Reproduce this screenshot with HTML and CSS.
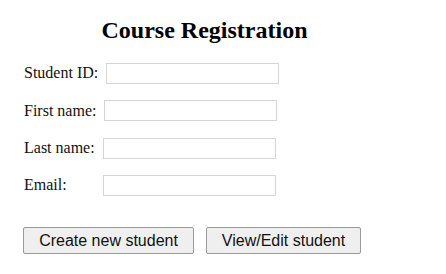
FILE: index.html
```html
<!DOCTYPE html>
<html>
<head>
<meta charset="utf-8">
<title>Course Registration</title>
<link rel="stylesheet" href="styles.css">
</head>
<body>
<div class="page">
  <h2 class="title">Course Registration</h2>
  <form class="form">
    <div class="fields">
      <div class="row"><label class="lbl lbl-id" for="sid">Student ID:</label><input class="field" id="sid" type="text"></div>
      <div class="row"><label class="lbl lbl-first" for="fn">First name:</label><input class="field" id="fn" type="text"></div>
      <div class="row"><label class="lbl lbl-last" for="ln">Last name:</label><input class="field" id="ln" type="text"></div>
      <div class="row"><label class="lbl lbl-email" for="em">Email:</label><input class="field" id="em" type="text"></div>
    </div>
    <div class="actions">
      <button type="button" class="btn btn-create">Create new student</button>
      <button type="button" class="btn btn-view">View/Edit student</button>
    </div>
  </form>
</div>
</body>
</html>
```
FILE: styles.css
```css
html, body {
  margin: 0;
  padding: 0;
  background: #ffffff;
}
body {
  padding: 8px;
  font-family: "Liberation Serif", "Times New Roman", serif;
  font-size: 16px;
  color: #111111;
}
.page {
  width: 393px;
}
.title {
  margin: 9px 0 0 0;
  font-size: 24px;
  font-weight: bold;
  text-align: center;
  line-height: 27.6px;
  color: #000000;
}
.form {
  margin: 18.4px 0 0 16px;
}
.fields {
  display: flex;
  flex-direction: column;
  gap: 16.3px;
}
.row {
  display: flex;
  align-items: center;
  height: 21px;
}
.lbl {
  line-height: 18.4px;
}
.lbl-id { margin-right: 8px; }
.lbl-first { margin-right: 7.6px; }
.lbl-last { margin-right: 8.4px; }
.lbl-email { width: 71px; margin-right: 8px; }
.field {
  box-sizing: border-box;
  width: 173px;
  height: 21px;
  margin: 0;
  padding: 1px 2px;
  border: 1px solid #d6d6d6;
  background: #ffffff;
  font-family: "Liberation Sans", Arial, sans-serif;
  font-size: 13.33px;
}
.actions {
  display: flex;
  gap: 12px;
  margin-top: 31.5px;
  margin-left: -1px;
}
.btn {
  box-sizing: border-box;
  height: 27px;
  margin: 0;
  padding: 0;
  border: 1px solid #9a9a9a;
  border-radius: 2px;
  background: #efefef;
  font-family: "Liberation Sans", Arial, sans-serif;
  font-size: 16px;
  color: #111111;
  white-space: nowrap;
  text-align: center;
}
.btn-create { width: 171px; }
.btn-view { width: 155px; }
```
